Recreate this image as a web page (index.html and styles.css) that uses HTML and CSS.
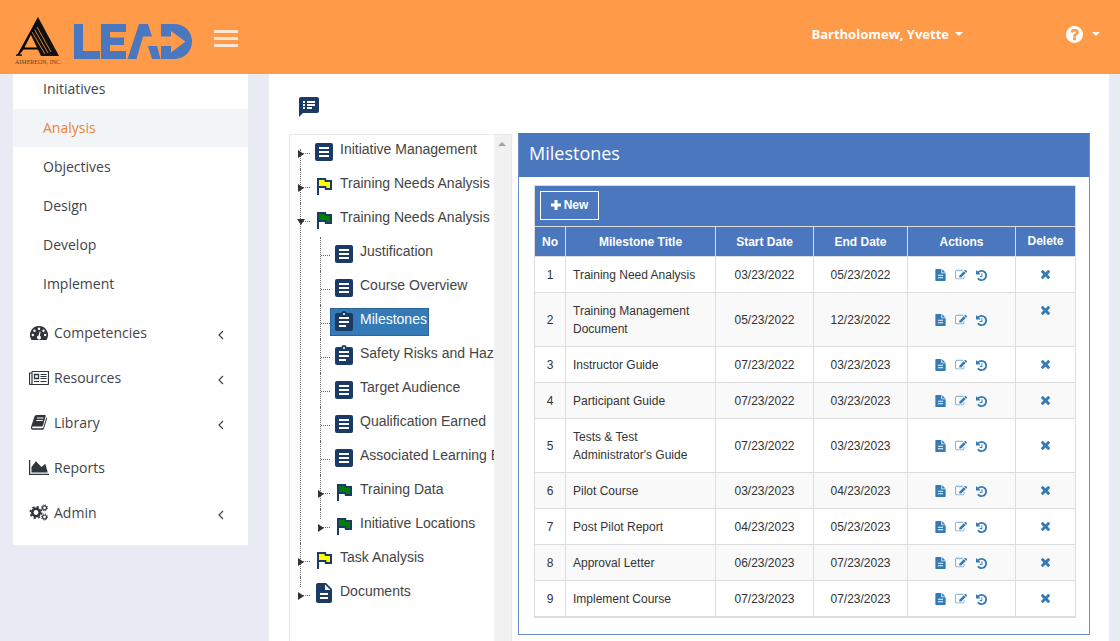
FILE: index.html
```html
<!DOCTYPE html>
<html lang="en">
<head>
    <meta charset="UTF-8">
    <meta name="viewport" content="width=device-width, initial-scale=1.0">
    <title>Milestones</title>
    <link rel="stylesheet" href="styles.css">
</head>
<body>
    <!-- icon sprite -->
    <svg class="sprite" width="0" height="0">
        <symbol id="i-list" viewBox="0 0 18 18">
            <rect width="18" height="18" rx="2" fill="#1b3a66"/>
            <path d="M4 4h10v2H4zM4 8h10v2H4zM4 12h10v2H4z" fill="#fff"/>
        </symbol>
        <symbol id="i-task" viewBox="0 0 18 20">
            <path d="M2 2h4.2a3 3 0 0 1 5.6 0H16a2 2 0 0 1 2 2v14a2 2 0 0 1-2 2H2a2 2 0 0 1-2-2V4a2 2 0 0 1 2-2z" fill="#1b3a66"/>
            <path d="M4 6h10v2H4zM4 10h10v2H4zM4 14h7v2H4z" fill="#fff"/>
            <circle cx="9" cy="3" r="1" fill="#fff"/>
        </symbol>
        <symbol id="i-doc" viewBox="0 0 16 20">
            <path d="M2 0h8l6 6v12a2 2 0 0 1-2 2H2a2 2 0 0 1-2-2V2a2 2 0 0 1 2-2z" fill="#1b3a66"/>
            <path d="M9 1.500V7h5.500zM4 10h8v2H4zM4 14h8v2H4z" fill="#fff"/>
        </symbol>
        <symbol id="i-flag" viewBox="0 0 15 17">
            <path d="M0 0h9l.4 2H15v10H8l-.4-2H2v7H0z" fill="#1b3a66"/>
            <path d="M2 2h5.400l.4 2H13v6H9.600l-.4-2H2z" fill="currentColor"/>
        </symbol>
        <symbol id="i-file" viewBox="128 0 1536 1792">
            <path fill-rule="evenodd" d="M1596 476q14 14 28 36h-472v-472q22 14 36 28zm-476 164h544v1056q0 40-28 68t-68 28h-1344q-40 0-68-28t-28-68v-1600q0-40 28-68t68-28h800v544q0 40 28 68t68 28zM512 860v150h768v-150zM512 1240v150h768v-150z"/>
        </symbol>
        <symbol id="i-edit" viewBox="0 0 1792 1792">
            <path opacity=".65" d="M1408 1058v190q0 119-84.500 203.500t-203.500 84.500h-832q-119 0-203.500-84.500t-84.500-203.500v-832q0-119 84.500-203.500t203.500-84.500h832q63 0 117 25 15 7 18 23 3 17-9 29l-49 49q-14 14-32 8-23-6-45-6h-832q-66 0-113 47t-47 113v832q0 66 47 113t113 47h832q66 0 113-47t47-113v-126q0-13 9-22l64-64q15-15 35-7t20 29z"/>
            <path d="M1312 320l288 288-672 672h-288v-288zm444 132l-92 92-288-288 92-92q28-28 68-28t68 28l152 152q28 28 28 68t-28 68z"/>
        </symbol>
        <symbol id="i-history" viewBox="128 128 1536 1536">
            <path d="M1664 896q0 156-61 298t-164 245-245 164-298 61q-172 0-327-72.500t-264-204.500q-7-10-6.500-22.500t8.500-20.500l137-138q10-9 25-9 16 2 23 12 73 95 179 147t225 52q104 0 198.500-40.500t163.500-109.500 109.500-163.500 40.500-198.500-40.500-198.500-109.500-163.500-163.500-109.500-198.500-40.500q-98 0-188 35.500t-160 101.500l137 138q31 30 14 69-17 40-59 40h-448q-26 0-45-19t-19-45v-448q0-42 40-59 39-17 69 14l130 129q107-101 244.500-156.500t284.500-55.500q156 0 298 61t245 164 164 245 61 298zm-640-288v448q0 14-9 23t-23 9h-320q-14 0-23-9t-9-23v-64q0-14 9-23t23-9h224v-352q0-14 9-23t23-9h64q14 0 23 9t9 23z"/>
        </symbol>
        <symbol id="i-times" viewBox="302 302 1188 1188">
            <path d="M1490 1258q0 40-28 68l-136 136q-28 28-68 28t-68-28l-294-294-294 294q-28 28-68 28t-68-28l-136-136q-28-28-28-68t28-68l294-294-294-294q-28-28-28-68t28-68l136-136q28-28 68-28t68 28l294 294 294-294q28-28 68-28t68 28l136 136q28 28 28 68t-28 68l-294 294 294 294q28 28 28 68z"/>
        </symbol>
        <symbol id="i-angle" viewBox="0 0 6 10">
            <path d="M5 1L1 5l4 4" fill="none" stroke="#3f444a" stroke-width="1.200"/>
        </symbol>
    </svg>

    <header class="topbar">
        <svg class="logo-mark" viewBox="0 0 48 48" width="48" height="48" role="img" aria-label="Aimereon, Inc.">
            <path d="M24 0l21 39H27L16 16z" fill="#111"/>
            <path d="M24 0L3.500 37.500H2v1.200h6v-1.200H5.500l4-5h15v-2H10.500l6.500-13 2 2z" fill="#000"/>
            <path d="M18 15l13 22M20.500 12.500L34 36M23 10l14 25" stroke="#ff9a48" stroke-width=".8"/>
            <text x="1" y="47" font-family="Liberation Serif, serif" font-size="6" fill="#6b3d1b">AIMEREON, INC.</text>
        </svg>
        <svg class="logo-lead" viewBox="0 0 118 35" width="118" height="35" role="img" aria-label="LEAD">
            <g fill="#4b77be">
                <path d="M0 0h9v27h17v8H0z"/>
                <path d="M27 0h25v8H36v5.500h14V21H36v6h16v8H27z"/>
                <path d="M53.500 35L65 0h9l4 12.500h-9L62.500 35zM74 22h9l3.500 13H78z"/>
                <path fill-rule="evenodd" d="M87 0h13c11 0 18 8 18 17.500S111 35 100 35H87V22h10v6.500l14.500-11L97 7v5.500H87z"/>
            </g>
        </svg>
        <button class="menu-toggle" aria-label="Toggle menu"><span></span><span></span><span></span></button>
        <button class="user-menu">Bartholomew, Yvette <i class="caret"></i></button>
        <button class="help-menu" aria-label="Help">
            <svg viewBox="128 128 1536 1536" width="17" height="17" fill="#fff"><path d="M1024 1376v-192q0-14-9-23t-23-9h-192q-14 0-23 9t-9 23v192q0 14 9 23t23 9h192q14 0 23-9t9-23zm256-672q0-88-55.500-163t-138.500-116-170-41q-243 0-371 213-15 24 8 42l132 100q7 6 19 6 16 0 25-12 53-68 86-92 34-24 86-24 48 0 85.500 26t37.500 59q0 38-20 61t-68 45q-63 28-115.500 86.500t-52.500 125.500v36q0 14 9 23t23 9h192q14 0 23-9t9-23q0-19 21.500-49.500t54.500-49.500q32-18 49-28.500t46-35 44.500-48 28-60.500 12.500-81zm384 192q0 209-103 385.500t-279.500 279.500-385.500 103-385.500-103-279.500-279.500-103-385.500 103-385.500 279.500-279.500 385.500-103 385.500 103 279.500 279.500 103 385.500z"/></svg>
            <i class="caret"></i>
        </button>
    </header>

    <div class="page">
        <nav class="sidebar">
            <ul class="submenu">
                <li><a href="#">Initiatives</a></li>
                <li><a href="#" class="active">Analysis</a></li>
                <li><a href="#">Objectives</a></li>
                <li><a href="#">Design</a></li>
                <li><a href="#">Develop</a></li>
                <li><a href="#">Implement</a></li>
            </ul>
            <ul class="menu">
                <li><a href="#">
                    <svg viewBox="0 0 20 16" width="20" height="16"><path d="M10 1a9 9 0 0 0-7.800 13.500q.3.500.8.500h14q.5 0 .8-.5A9 9 0 0 0 10 1z" fill="#2f353b"/><g fill="#fff"><circle cx="3.800" cy="10" r="1.200"/><circle cx="5.500" cy="5.800" r="1.200"/><circle cx="10" cy="3.800" r="1.200"/><circle cx="14.500" cy="5.800" r="1.200"/><circle cx="16.200" cy="10" r="1.200"/><path d="M10.600 6.500l1 .2-.7 4a2 2 0 1 1-1.200-.2z"/></g></svg>
                    <span>Competencies</span><svg class="arrow" width="6" height="10"><use href="#i-angle"/></svg></a></li>
                <li><a href="#">
                    <svg viewBox="0 0 20 16" width="20" height="16" fill="none" stroke="#2f353b"><path d="M3 1.500h16.500v12q0 1-1 1h-17q-1 0-1-1V3H3M3 1.500v12q0 1-1 1" stroke-width="1.200"/><path d="M5.500 4.500h4v4h-4z" stroke-width="1.300"/><path d="M11.500 4.500h6M11.500 6.500h6M11.500 8.500h6M5 11.500h5M11.500 11.500h6"/></svg>
                    <span>Resources</span><svg class="arrow" width="6" height="10"><use href="#i-angle"/></svg></a></li>
                <li><a href="#">
                    <svg viewBox="0 0 20 16" width="20" height="16"><path d="M7.500 0H16q1 0 .7 1L14 10.500q-.3 1-1.300 1H4q-1 0-.9 1 .1.700 1 .7h9q1 0 1.300-1L17.300 2.500q1 .3.700 1.300l-3 9.700q-.4 1.300-1.500 1.300H4Q1.500 14.800 2 12L5.300 2Q6 0 7.500 0z" fill="#2f353b"/><path d="M8 3h6.500M7.300 5.500h6.500" stroke="#fff" stroke-width="1.100"/></svg>
                    <span>Library</span><svg class="arrow" width="6" height="10"><use href="#i-angle"/></svg></a></li>
                <li><a href="#">
                    <svg viewBox="0 128 2048 1536" width="20" height="15" fill="#2f353b"><path d="M2048 1536v128H0V128h128v1408zM1664 512l256 896H256V832l448-576 576 576z"/></svg>
                    <span>Reports</span></a></li>
                <li><a href="#">
                    <svg viewBox="0 0 20 17" width="20" height="17" fill="none" stroke="#2f353b"><circle cx="7" cy="8.500" r="3.700" stroke-width="2.600"/><circle cx="7" cy="8.500" r="5.600" stroke-width="1.800" stroke-dasharray="2.200 2.200"/><circle cx="15.500" cy="3.800" r="2" stroke-width="1.200"/><circle cx="15.500" cy="3.800" r="3" stroke-width="1" stroke-dasharray="1.180 1.180"/><circle cx="15.500" cy="13" r="2" stroke-width="1.200"/><circle cx="15.500" cy="13" r="3" stroke-width="1" stroke-dasharray="1.180 1.180"/></svg>
                    <span>Admin</span><svg class="arrow" width="6" height="10"><use href="#i-angle"/></svg></a></li>
            </ul>
        </nav>

        <main class="content">
            <button class="notes" aria-label="Notes">
                <svg viewBox="0 0 20 20" width="20" height="20"><path d="M2 0h16a2 2 0 0 1 2 2v12a2 2 0 0 1-2 2H4l-4 4V2a2 2 0 0 1 2-2z" fill="#1b3a66"/><path d="M4 4h2v2H4zM8 4h8v2H8zM4 7h2v2H4zM8 7h8v2H8zM4 10h2v2H4zM8 10h5v2H8z" fill="#fff"/></svg>
            </button>

            <div class="columns">
                <section class="tree-box">
                    <ul class="tree">
                        <li class="closed"><a href="#" class="node"><svg width="18" height="18"><use href="#i-list"/></svg><span>Initiative Management</span></a></li>
                        <li class="closed"><a href="#" class="node"><svg class="flag yellow" width="15" height="17"><use href="#i-flag"/></svg><span>Training Needs Analysis</span></a></li>
                        <li class="open"><a href="#" class="node"><svg class="flag green" width="15" height="17"><use href="#i-flag"/></svg><span>Training Needs Analysis</span></a>
                            <ul>
                                <li><a href="#" class="node"><svg width="18" height="18"><use href="#i-list"/></svg><span>Justification</span></a></li>
                                <li><a href="#" class="node"><svg width="18" height="18"><use href="#i-list"/></svg><span>Course Overview</span></a></li>
                                <li><a href="#" class="node selected"><svg width="18" height="20"><use href="#i-task"/></svg><span>Milestones</span></a></li>
                                <li><a href="#" class="node"><svg width="18" height="20"><use href="#i-task"/></svg><span>Safety Risks and Hazards</span></a></li>
                                <li><a href="#" class="node"><svg width="18" height="18"><use href="#i-list"/></svg><span>Target Audience</span></a></li>
                                <li><a href="#" class="node"><svg width="18" height="18"><use href="#i-list"/></svg><span>Qualification Earned</span></a></li>
                                <li><a href="#" class="node"><svg width="18" height="18"><use href="#i-list"/></svg><span>Associated Learning Events</span></a></li>
                                <li class="closed"><a href="#" class="node"><svg class="flag green" width="15" height="17"><use href="#i-flag"/></svg><span>Training Data</span></a></li>
                                <li class="closed"><a href="#" class="node"><svg class="flag green" width="15" height="17"><use href="#i-flag"/></svg><span>Initiative Locations</span></a></li>
                            </ul>
                        </li>
                        <li class="closed"><a href="#" class="node"><svg class="flag yellow" width="15" height="17"><use href="#i-flag"/></svg><span>Task Analysis</span></a></li>
                        <li class="closed"><a href="#" class="node"><svg class="doc" width="16" height="20"><use href="#i-doc"/></svg><span>Documents</span></a></li>
                    </ul>
                    <div class="scrollbar"><i></i></div>
                </section>

                <section class="panel">
                    <h1>Milestones</h1>
                    <div class="grid">
                        <div class="toolbar">
                            <button class="btn-new"><svg viewBox="0 0 10 10" width="10" height="10"><path d="M3.500 0h3v3.500H10v3H6.500V10h-3V6.500H0v-3h3.500z" fill="#fff"/></svg>New</button>
                        </div>
                        <table>
                            <colgroup>
                                <col class="c-no"><col><col class="c-start"><col class="c-end"><col class="c-actions"><col class="c-delete">
                            </colgroup>
                            <thead>
                                <tr><th>No</th><th>Milestone Title</th><th>Start Date</th><th>End Date</th><th>Actions</th><th class="del">Delete</th></tr>
                            </thead>
                            <tbody id="rows"></tbody>
                        </table>
                    </div>
                </section>
            </div>
        </main>
    </div>

    <script src="script.js"></script>
</body>
</html>
```
FILE: styles.css
```css
* {
    box-sizing: border-box;
}

body {
    margin: 0;
    padding-top: 70px;
    height: 100vh;
    overflow: hidden;
    background: #e8ebf4;
    font-family: 'Open Sans', sans-serif;
    font-size: 14px;
    color: #333;
}

ul {
    list-style: none;
    margin: 0;
    padding: 0;
}

a {
    color: inherit;
    text-decoration: none;
}

button {
    border: 0;
    padding: 0;
    background: none;
    font: inherit;
    color: inherit;
    cursor: pointer;
}

svg {
    display: block;
    flex: none;
}

.sprite {
    position: absolute;
}

/* top bar */
.topbar {
    position: fixed;
    top: 0;
    left: 0;
    right: 0;
    z-index: 10;
    height: 74px;
    padding: 17px 20px 0 14px;
    display: flex;
    align-items: flex-start;
    background: #ff9a48;
    color: #fff;
}

.logo-lead {
    margin: 7px 22px 0 12px;
}

.menu-toggle {
    display: flex;
    flex-direction: column;
    gap: 4px;
    margin-top: 13px;
}

.menu-toggle span {
    width: 24px;
    height: 3px;
    background: #ffe6d3;
}

.caret {
    border: 4px solid transparent;
    border-top-color: #fff;
    border-bottom: 0;
}

.user-menu,
.help-menu {
    display: flex;
    align-items: center;
    height: 34px;
    gap: 6px;
    font-size: 13px;
    font-weight: 700;
}

.user-menu {
    margin-left: auto;
    margin-right: 103px;
}

.help-menu {
    gap: 9px;
}

/* sidebar */
.page {
    display: flex;
    align-items: flex-start;
    height: 100%;
    padding: 0 11px 0 13px;
    gap: 21px;
}

.sidebar {
    flex: none;
    width: 235px;
    padding-bottom: 10px;
    background: #fff;
    color: #3f444a;
}

.submenu {
    margin-bottom: 7px;
}

.submenu a {
    display: block;
    height: 38px;
    margin-bottom: 1px;
    padding-left: 30px;
    line-height: 38px;
}

.submenu .active {
    background: #f2f5f8;
    color: #e8833a;
}

.menu a {
    display: flex;
    align-items: center;
    height: 45px;
    padding: 0 24px 0 16px;
}

.menu span {
    margin-left: 5px;
}

.arrow {
    margin: 4px 0 0 auto;
}

/* content */
.content {
    flex: 1;
    min-width: 0;
    height: 100%;
    display: flex;
    flex-direction: column;
    padding: 27px 19px 0 20px;
    background: #fff;
}

.notes {
    align-self: flex-start;
    margin: 0 0 16px 10px;
}

.columns {
    flex: 1;
    min-height: 0;
    display: flex;
    align-items: flex-start;
    gap: 6px;
}

.tree-box {
    flex: none;
    width: 223px;
    height: 100%;
    margin-top: 1px;
    display: flex;
    border: 1px solid #e5e8ec;
    border-bottom: 0;
    font-family: 'Liberation Sans', Arial, sans-serif;
}

.tree {
    flex: 1;
    min-width: 0;
    padding-left: 10px;
    overflow: hidden;
}

.tree li {
    position: relative;
    padding-left: 10px;
    white-space: nowrap;
}

.tree ul {
    margin-left: 10px;
}

/* dotted guides */
.tree li::before {
    content: '';
    position: absolute;
    left: 0;
    top: 0;
    bottom: 0;
    border-left: 1px dotted #666;
}

.tree > li:first-child::before {
    top: 14px;
}

.tree li:last-child::before {
    bottom: auto;
    height: 10px;
}

.tree li::after {
    content: '';
    position: absolute;
    left: 1px;
    top: 18px;
    width: 9px;
    border-top: 1px dotted #666;
}

.node {
    display: inline-flex;
    align-items: flex-end;
    vertical-align: top;
    height: 28px;
    margin: 3px 0;
    padding: 0 1px 4px 4px;
    border: 1px solid transparent;
    color: #444;
}

.closed > .node::before,
.open > .node::before {
    content: '';
    position: absolute;
    z-index: 1;
    left: -2px;
    top: 15px;
    border: 4px solid transparent;
    border-left: 6px solid #333;
    border-right: 0;
}

.open > .node::before {
    left: -3px;
    top: 16px;
    border: 4px solid transparent;
    border-top: 6px solid #333;
    border-bottom: 0;
}

.node span {
    align-self: flex-start;
    margin-left: 7px;
    line-height: 20px;
}

.node .flag {
    margin: 0 1px 0 2px;
}

.node .doc {
    margin: 0 1px;
}

.yellow {
    color: #ff0;
}

.green {
    color: #008000;
}

.node.selected {
    background: #337ab7;
    border-color: #2a6595;
    color: #fff;
}

.scrollbar {
    width: 17px;
    background: #f1f1f1;
}

.scrollbar i {
    display: block;
    width: 8px;
    margin: 7px 0 0 4px;
    border: 4px solid transparent;
    border-top: 0;
    border-bottom-color: #a3a3a3;
}

/* panel */
.panel {
    flex: 1;
    min-width: 0;
    padding-bottom: 16px;
    border: 1px solid #6a8fca;
    border-top: 0;
}

.panel h1 {
    margin: 0 0 8px;
    padding: 0 10px;
    height: 44px;
    line-height: 40px;
    background: #4b77be;
    color: #fff;
    font-size: 18px;
    font-weight: 400;
}

.grid {
    margin: 0 13px 0 15px;
    border-top: 1px solid #ddd;
    border-bottom: 1px solid #ddd;
    font-family: 'Liberation Sans', Arial, sans-serif;
    font-size: 12px;
}

.toolbar {
    height: 40px;
    padding: 5px;
    background: #4b77be;
    border: 1px solid #ddd;
    border-width: 0 1px;
}

.btn-new {
    display: flex;
    align-items: center;
    justify-content: center;
    gap: 3px;
    width: 59px;
    height: 29px;
    padding-bottom: 2px;
    border: 1px solid #fff;
    color: #fff;
    font-weight: 700;
}

table {
    width: 100%;
    table-layout: fixed;
    border-collapse: collapse;
}

.c-no {
    width: 31px;
}

.c-start {
    width: 98px;
}

.c-end {
    width: 94px;
}

.c-actions {
    width: 108px;
}

.c-delete {
    width: 60px;
}

th,
td {
    border: 1px solid #ddd;
    padding: 9px 7px 8px;
    line-height: 18px;
    text-align: center;
    vertical-align: middle;
}

th {
    height: 30px;
    padding: 6px 0 5px;
    background: #4b77be;
    color: #fff;
}

th.del {
    padding: 5px 0 6px;
}

td.title {
    text-align: left;
}

td.del {
    vertical-align: top;
    padding-top: 13px;
}

tbody tr:nth-child(even) {
    background: #f9f9f9;
}

tbody tr:nth-child(odd) .del {
    vertical-align: middle;
    padding-top: 8px;
}

.actions {
    display: flex;
    justify-content: center;
    align-items: center;
    gap: 9px;
    padding-right: 2px;
    fill: #337ab7;
}

td.del button {
    display: block;
    margin: 0 auto;
    fill: #337ab7;
}
```
FILE: script.js
```js
const milestones = [
    ['Training Need Analysis', '03/23/2022', '05/23/2022'],
    ['Training Management Document', '05/23/2022', '12/23/2022'],
    ['Instructor Guide', '07/23/2022', '03/23/2023'],
    ['Participant Guide', '07/23/2022', '03/23/2023'],
    ["Tests & Test Administrator's Guide", '07/23/2022', '03/23/2023'],
    ['Pilot Course', '03/23/2023', '04/23/2023'],
    ['Post Pilot Report', '04/23/2023', '05/23/2023'],
    ['Approval Letter', '06/23/2023', '07/23/2023'],
    ['Implement Course', '07/23/2023', '07/23/2023']
];

function iconButton(name, label, w, h) {
    return `<button aria-label="${label}"><svg width="${w}" height="${h}"><use href="#i-${name}"/></svg></button>`;
}

document.getElementById('rows').innerHTML = milestones.map(([title, start, end], i) => `
    <tr>
        <td>${i + 1}</td>
        <td class="title">${title.replace('&', '&amp;')}</td>
        <td>${start}</td>
        <td>${end}</td>
        <td><div class="actions">
            ${iconButton('file', 'View', 11, 12)}
            ${iconButton('edit', 'Edit', 12, 12)}
            ${iconButton('history', 'History', 11, 11)}
        </div></td>
        <td class="del">${iconButton('times', 'Delete', 9, 9)}</td>
    </tr>`).join('');
```
